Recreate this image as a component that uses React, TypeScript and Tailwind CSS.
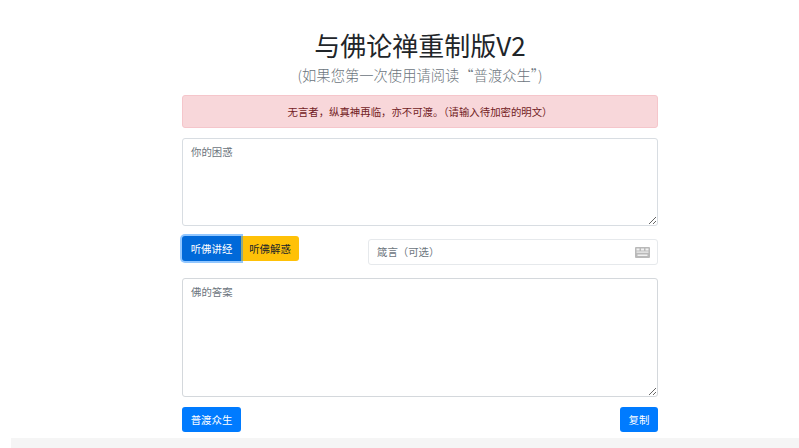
export default function App() {
  const font = "font-['Noto_Sans_CJK_SC','Noto_Sans',sans-serif]";
  return (
    <div className={`h-[448px] overflow-hidden bg-white text-[#212529] ${font}`}>
      <div className="ml-[182px] w-[476px] pt-[26px]">
        <h1 className="h-[38px] text-center text-[26px] leading-[38px] font-normal text-[#212529]">与佛论禅重制版V2</h1>
        <p className="mt-[1px] h-[20px] text-center text-[14.3px] leading-[20px] font-light text-[#6c757d]">(如果您第一次使用请阅读“普渡众生”)</p>
        <div className="mt-[10px] flex h-[33px] items-center justify-center rounded-[3px] border border-[#f5c6cb] bg-[#f8d7da] text-[10.4px] text-[#721c24]">
          无言者，纵真神再临，亦不可渡。（请输入待加密的明文）
        </div>
        <textarea
          readOnly
          placeholder="你的困惑"
          className="mt-[10px] block h-[88px] w-full rounded-[3px] border border-[#d8dde2] px-[8px] py-[5px] text-[10.4px] leading-[15.6px] text-[#495057] placeholder:text-[#6c757d] outline-none"
        />
        <div className="mt-[10px] flex items-start justify-between">
          <div className="flex">
            <button className="h-[25px] w-[59px] rounded-l-[3px] bg-[#0069d9] text-[10.4px] text-white shadow-[0_0_0_2px_rgba(38,143,255,0.5)] relative z-10">听佛讲经</button>
            <button className="h-[25px] w-[58px] rounded-r-[3px] bg-[#ffc107] text-[10.4px] text-[#212529]">听佛解惑</button>
          </div>
          <div className="mt-[3px] flex h-[26px] w-[290px] items-center justify-between rounded-[3px] border border-[#e6e9ec] pr-[7px] pl-[8px]">
            <input
              readOnly
              placeholder="箴言（可选）"
              className="w-[200px] bg-transparent text-[10.4px] text-[#495057] placeholder:text-[#6c757d] outline-none"
            />
            <svg width="15" height="11" viewBox="0 0 15 11" aria-hidden="true">
              <rect width="15" height="11" rx="1" fill="#b9b9b9" />
              <g fill="#f1f1f1">
                <rect x="1.5" y="1.5" width="3" height="2" />
                <rect x="6" y="1.5" width="3" height="2" />
                <rect x="10.5" y="1.5" width="3" height="2" />
                <rect x="1.5" y="4.5" width="12" height="1.2" />
                <rect x="2.5" y="7.5" width="10" height="1.5" />
              </g>
            </svg>
          </div>
        </div>
        <textarea
          readOnly
          placeholder="佛的答案"
          className="mt-[13px] block h-[119px] w-full rounded-[3px] border border-[#d4d8dc] px-[8px] py-[5px] text-[10.4px] leading-[15.6px] text-[#495057] placeholder:text-[#6c757d] outline-none"
        />
        <div className="mt-[10px] flex justify-between">
          <button className="h-[25px] w-[59px] rounded-[3px] bg-[#007bff] text-[10.4px] text-white">普渡众生</button>
          <button className="h-[25px] w-[38px] rounded-[3px] bg-[#007bff] text-[10.4px] text-white">复制</button>
        </div>
      </div>
      <div className="mt-[6px] ml-[11px] h-[40px] bg-[#f5f5f5]" />
    </div>
  );
}
